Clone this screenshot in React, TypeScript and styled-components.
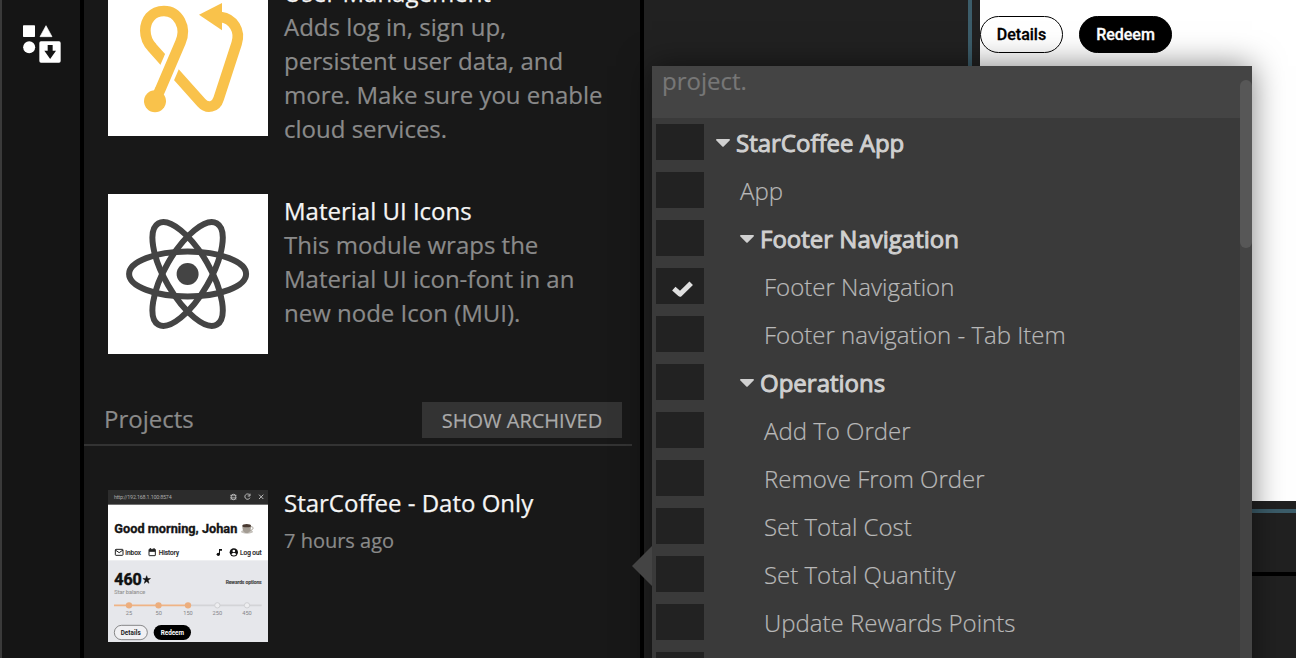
import React from 'react';
import styled, { createGlobalStyle } from 'styled-components';

const GlobalStyle = createGlobalStyle`
  * { box-sizing: border-box; }
  body {
    margin: 0;
    overflow: hidden;
    background: #212121;
    font-family: 'Open Sans', 'Noto Sans', sans-serif;
    -webkit-font-smoothing: antialiased;
  }
`;

const Shell = styled.div`
  position: relative;
  display: flex;
  width: 1296px;
  height: 658px;
  overflow: hidden;
`;

const Rail = styled.nav`
  flex: none;
  width: 84px;
  padding: 25px 0 0 21px;
  background: #151515;
  border-left: 2px solid #3a3a3a;
  border-right: 4px solid #000;
`;

const Panel = styled.aside`
  flex: none;
  width: 560px;
  height: 658px;
  overflow: hidden;
  background: #181818;
  border-right: 4px solid #000;
`;

const PanelContent = styled.div`
  display: flex;
  flex-direction: column;
  margin-top: -24px;
`;

const Card = styled.article`
  display: flex;
  align-items: flex-start;
  gap: 16px;
  padding-left: 24px;
  margin-bottom: 48px;
`;

const Thumb = styled.div<{ $height?: number }>`
  flex: none;
  width: 160px;
  height: ${(p) => p.$height ?? 160}px;
  background: #fff;
  svg { display: block; }
`;

const CardText = styled.div<{ $lift?: number }>`
  width: 340px;
  margin-top: ${(p) => -(p.$lift ?? 0)}px;
  font-size: 24px;
  line-height: 34px;
  white-space: nowrap;
`;

const Title = styled.h3`
  margin: 0;
  font-size: 24px;
  font-weight: 400;
  line-height: 34px;
  color: #f5f5f5;
  -webkit-text-stroke: 0.25px #f5f5f5;
`;

const Description = styled.p`
  margin: 0;
  color: #8a8a8a;
  -webkit-text-stroke: 0.2px #8a8a8a;
`;

const Age = styled.p`
  margin: 4px 0 0;
  font-size: 20px;
  color: #8a8a8a;
  -webkit-text-stroke: 0.2px #8a8a8a;
`;

const SectionHeader = styled.header`
  display: flex;
  justify-content: space-between;
  align-items: flex-start;
  width: 548px;
  height: 44px;
  margin-bottom: 44px;
  padding: 0 10px 0 20px;
  border-bottom: 2px solid #333;
`;

const SectionTitle = styled.h2`
  margin: 0;
  font-size: 24px;
  font-weight: 400;
  line-height: 34px;
  color: #8a8a8a;
  -webkit-text-stroke: 0.2px #8a8a8a;
`;

const ArchiveButton = styled.button`
  width: 200px;
  height: 36px;
  padding: 1px 0 0;
  border: 0;
  background: #333;
  color: #aaa;
  font: 400 20px/35px 'Open Sans', sans-serif;
  -webkit-text-stroke: 0.2px #aaa;
`;

const Workspace = styled.main`
  display: flex;
  flex-direction: column;
  flex: 1;
  background: #212121;
`;

const PreviewFrame = styled.section`
  height: 513px;
  margin-left: 324px;
  padding: 0 0 8px 8px;
  border-left: 4px solid #3c5d6a;
  border-bottom: 4px solid #3c5d6a;
`;

const Preview = styled.div`
  display: flex;
  gap: 16px;
  height: 501px;
  padding-top: 16px;
  background: #fff;
`;

const Pill = styled.button<{ $solid?: boolean }>`
  width: ${(p) => (p.$solid ? 93 : 83)}px;
  height: 37px;
  padding: 0;
  border: 1px solid #000;
  border-radius: 19px;
  background: ${(p) => (p.$solid ? '#000' : '#fff')};
  color: ${(p) => (p.$solid ? '#fff' : '#000')};
  font: 500 16px/35px Roboto, sans-serif;
  -webkit-text-stroke: 0.3px currentColor;
`;

const Divider = styled.div`
  height: 4px;
  margin-top: 59px;
  background: #000;
`;

const Popup = styled.div`
  position: absolute;
  left: 652px;
  top: 66px;
  width: 600px;
  height: 640px;
  background: #3a3a3a;
  box-shadow: 0 0 30px rgba(0, 0, 0, 0.5);
`;

const PopupArrow = styled.div`
  position: absolute;
  left: -20px;
  top: 480px;
  border: 20px solid transparent;
  border-left-width: 0;
  border-right-color: #444;
`;

const PopupHeader = styled.div`
  height: 52px;
  padding: 0 10px;
  background: #444;
  color: #777;
  font-size: 24px;
  line-height: 30px;
  -webkit-text-stroke: 0.2px #777;
`;

const ScrollTrack = styled.div`
  position: absolute;
  top: 0;
  right: 0;
  width: 12px;
  height: 100%;
  padding-top: 14px;
  background: #444;
`;

const ScrollThumb = styled.div`
  height: 168px;
  border-radius: 6px;
  background: #575757;
`;

const Row = styled.div`
  display: flex;
  align-items: center;
  height: 48px;
  padding-left: 4px;
`;

const RowLabel = styled.span<{ $level: number; $group: boolean }>`
  display: flex;
  align-items: center;
  gap: 6px;
  margin-left: ${(p) => 12 + p.$level * 24}px;
  padding-top: 2px;
  white-space: nowrap;
  font-size: 24px;
  line-height: 34px;
  font-weight: ${(p) => (p.$group ? 400 : 300)};
  color: ${(p) => (p.$group ? '#d0d0d0' : '#b8b8b8')};
  -webkit-text-stroke: ${(p) => (p.$group ? '0.95px' : '0.2px')} currentColor;
`;

const Checkbox = styled.div`
  display: flex;
  align-items: center;
  justify-content: center;
  width: 48px;
  height: 36px;
  background: #222;
  svg { margin: 7px 0 0 4px; }
`;

type Item = { label: string; level: number; group?: boolean; checked?: boolean };

const items: Item[] = [
  { label: 'StarCoffee App', level: 0, group: true },
  { label: 'App', level: 1 },
  { label: 'Footer Navigation', level: 1, group: true },
  { label: 'Footer Navigation', level: 2, checked: true },
  { label: 'Footer navigation - Tab Item', level: 2 },
  { label: 'Operations', level: 1, group: true },
  { label: 'Add To Order', level: 2 },
  { label: 'Remove From Order', level: 2 },
  { label: 'Set Total Cost', level: 2 },
  { label: 'Set Total Quantity', level: 2 },
  { label: 'Update Rewards Points', level: 2 },
  { label: '', level: 2 },
];

const ModulesIcon = () => (
  <svg width="38" height="38" viewBox="69 75 114 114" fill="#fff">
    <rect x="69" y="76" width="36" height="35" rx="2" />
    <path d="M138 77 L156 110 H120 Z" stroke="#fff" strokeWidth="2" strokeLinejoin="round" />
    <circle cx="87.5" cy="142" r="18" />
    <rect x="118" y="124" width="64" height="64" rx="5" />
    <path d="M143 135 H158 V152 H168 L150.500 177 L133 152 H143 Z" fill="#151515" />
  </svg>
);

const UserFlowArt = () => (
  <svg width="160" height="160" viewBox="324 -72 480 480" fill="none" stroke="#f9c24b" strokeWidth="32">
    <path d="M455 141 L604 308 C622 328 648 322 656 296 L710 130 C722 92 700 56 662 51" />
    <path d="M489 247 L530 152" stroke="#fff" strokeWidth="56" />
    <path d="M465 303 L481 268 L541 128 C562 82 534 33 492 33 C455 33 436 62 436 92 C436 114 443 128 457 143" />
    <circle cx="465" cy="304" r="33" fill="#f9c24b" stroke="none" />
    <path d="M597 44 L666 9 V91 Z" fill="#f9c24b" stroke="none" />
  </svg>
);

const AtomArt = () => (
  <svg width="160" height="160" viewBox="0 0 160 160" fill="none" stroke="#444" strokeWidth="6">
    {[0, 60, 120].map((angle) => (
      <ellipse key={angle} cx="79.600" cy="80" rx="58.500" ry="22.500" transform={`rotate(${angle} 79.600 80)`} />
    ))}
    <circle cx="79.600" cy="80" r="11" fill="#444" stroke="none" />
  </svg>
);

const AppShot = () => (
  <svg width="160" height="152" viewBox="24 24 480 456" fontFamily="Roboto, sans-serif">
    <rect x="24" y="24" width="480" height="456" fill="#fff" />
    <rect x="24" y="24" width="480" height="44" fill="#2c2c2c" />
    <text x="42" y="50" fontSize="16" fill="#aaa" textLength="173">http://192.168.1.100:8574</text>
    <g fill="none" stroke="#bbb" strokeWidth="3">
      <rect x="394" y="37" width="13" height="16" rx="6" />
      <path d="M390 40 h20 M390 46 h20 M390 51 h20" strokeWidth="2" />
      <path d="M449 39 A8 8 0 1 0 450 47 M450 35 V42 H443" />
      <path d="M477 38 L490 51 M490 38 L477 51" />
    </g>
    <text x="43" y="154" fontSize="38" fontWeight="700" fill="#151515" stroke="#151515" strokeWidth="1" textLength="369" lengthAdjust="spacingAndGlyphs">Good morning, Johan</text>
    <ellipse cx="441" cy="149" rx="18" ry="6" fill="#c5c1bb" />
    <path d="M427 131 H453 C453 145 449 153 440 153 C431 153 427 145 427 131 Z" fill="#a39c93" />
    <path d="M453 134 C463 134 460 145 450 145" fill="none" stroke="#a39c93" strokeWidth="3" />
    <ellipse cx="440" cy="131" rx="13" ry="5" fill="#493a31" />
    <g fill="none" stroke="#222" strokeWidth="3">
      <rect x="46" y="202" width="23" height="18" rx="2" />
      <path d="M46 204 L57.500 212 L69 204" />
      <rect x="147" y="202" width="19" height="19" rx="1" />
      <path d="M147 206 H166" strokeWidth="7" />
      <path d="M151 198 V204 M162 198 V204" />
    </g>
    <g fill="#222" fontSize="20" stroke="#222" strokeWidth=".7">
      <text x="76" y="219" textLength="47" lengthAdjust="spacingAndGlyphs">Inbox</text>
      <text x="176" y="219" textLength="61" lengthAdjust="spacingAndGlyphs">History</text>
      <text x="420" y="219" textLength="65" lengthAdjust="spacingAndGlyphs">Log out</text>
    </g>
    <circle cx="355" cy="217" r="5" fill="#111" />
    <path d="M357 217 V201 H366 V206 H360 V217 Z" fill="#111" />
    <circle cx="401.500" cy="211" r="12.500" fill="#111" />
    <circle cx="401.500" cy="207" r="4" fill="#fff" />
    <path d="M394 217 C397 212 406 212 409 217 C405 222 398 222 394 217 Z" fill="#fff" />
    <rect x="24" y="235" width="480" height="245" fill="#e6e7eb" />
    <text x="43" y="308" fontSize="48" fontWeight="700" fill="#111" stroke="#111" strokeWidth="1.500" textLength="82">460</text>
    <path d="M140 281 l3 8.500 h8.500 l-7 5.500 l2.500 9 l-7 -5.500 l-7 5.500 l2.500 -9 l-7 -5.500 h8.500 z" fill="#111" stroke="#111" strokeWidth="1.500" />
    <text x="43" y="335" fontSize="17" fill="#999" stroke="#999" strokeWidth=".4" textLength="93" lengthAdjust="spacingAndGlyphs">Star balance</text>
    <text x="377" y="307" fontSize="15" fontWeight="600" fill="#444" stroke="#444" strokeWidth=".4" textLength="108">Rewards options</text>
    <path d="M264 370 H485" stroke="#d3d4d7" strokeWidth="5" />
    <path d="M42 370 H264" stroke="#efb485" strokeWidth="5" />
    {[87, 175.500, 264].map((x) => <circle key={x} cx={x} cy="370" r="9.500" fill="#ecae7e" />)}
    {[352, 441].map((x) => <circle key={x} cx={x} cy="370" r="8" fill="#eeeef0" stroke="#cfd0d3" strokeWidth="3" />)}
    <g fontSize="17" fill="#858588" textAnchor="middle">
      <text x="87" y="400">25</text>
      <text x="176" y="400">50</text>
      <text x="264" y="400">150</text>
      <text x="352" y="400">250</text>
      <text x="441" y="400">450</text>
    </g>
    <rect x="43" y="430" width="99" height="43" rx="21.500" fill="#f0f0f3" stroke="#555" strokeWidth="2" />
    <rect x="161" y="429" width="112" height="45" rx="22.500" fill="#000" />
    <g fontSize="19" fontWeight="700" textAnchor="middle">
      <text x="92" y="459" fill="#222" textLength="60">Details</text>
      <text x="217" y="459" fill="#fff" textLength="70">Redeem</text>
    </g>
  </svg>
);

const Caret = () => (
  <svg width="14" height="8" viewBox="0 0 14 8" fill="#d0d0d0">
    <path d="M1 0 H13 C14 0 14.300 .8 13.600 1.500 L7.900 7.300 C7.300 8 6.700 8 6.100 7.300 L.4 1.500 C-.3 .8 0 0 1 0 Z" />
  </svg>
);

const Check = () => (
  <svg width="21" height="17" viewBox="0 0 21 17" fill="none" stroke="#e0e0e0" strokeWidth="5" strokeLinejoin="round">
    <path d="M1.800 7.600 L8 13.200 L19.200 2.200" />
  </svg>
);

export default function App() {
  return (
    <>
      <GlobalStyle />
      <Shell>
        <Rail><ModulesIcon /></Rail>
        <Panel>
          <PanelContent>
            <Card>
              <Thumb><UserFlowArt /></Thumb>
              <CardText>
                <Title>User Management</Title>
                <Description>
                  Adds log in, sign up,<br />persistent user data, and<br />more. Make sure you enable<br />cloud services.
                </Description>
              </CardText>
            </Card>
            <Card>
              <Thumb><AtomArt /></Thumb>
              <CardText>
                <Title>Material UI Icons</Title>
                <Description>
                  This module wraps the<br />Material UI icon-font in an<br />new node Icon (MUI).
                </Description>
              </CardText>
            </Card>
            <SectionHeader>
              <SectionTitle>Projects</SectionTitle>
              <ArchiveButton>SHOW ARCHIVED</ArchiveButton>
            </SectionHeader>
            <Card>
              <Thumb $height={152}><AppShot /></Thumb>
              <CardText $lift={4}>
                <Title>StarCoffee - Dato Only</Title>
                <Age>7 hours ago</Age>
              </CardText>
            </Card>
          </PanelContent>
        </Panel>
        <Workspace>
          <PreviewFrame>
            <Preview>
              <Pill>Details</Pill>
              <Pill $solid>Redeem</Pill>
            </Preview>
          </PreviewFrame>
          <Divider />
        </Workspace>
        <Popup>
          <PopupArrow />
          <PopupHeader>project.</PopupHeader>
          {items.map((item, i) => (
            <Row key={i}>
              <Checkbox>{item.checked && <Check />}</Checkbox>
              <RowLabel $level={item.level} $group={!!item.group}>
                {item.group && <Caret />}
                {item.label}
              </RowLabel>
            </Row>
          ))}
          <ScrollTrack><ScrollThumb /></ScrollTrack>
        </Popup>
      </Shell>
    </>
  );
}
